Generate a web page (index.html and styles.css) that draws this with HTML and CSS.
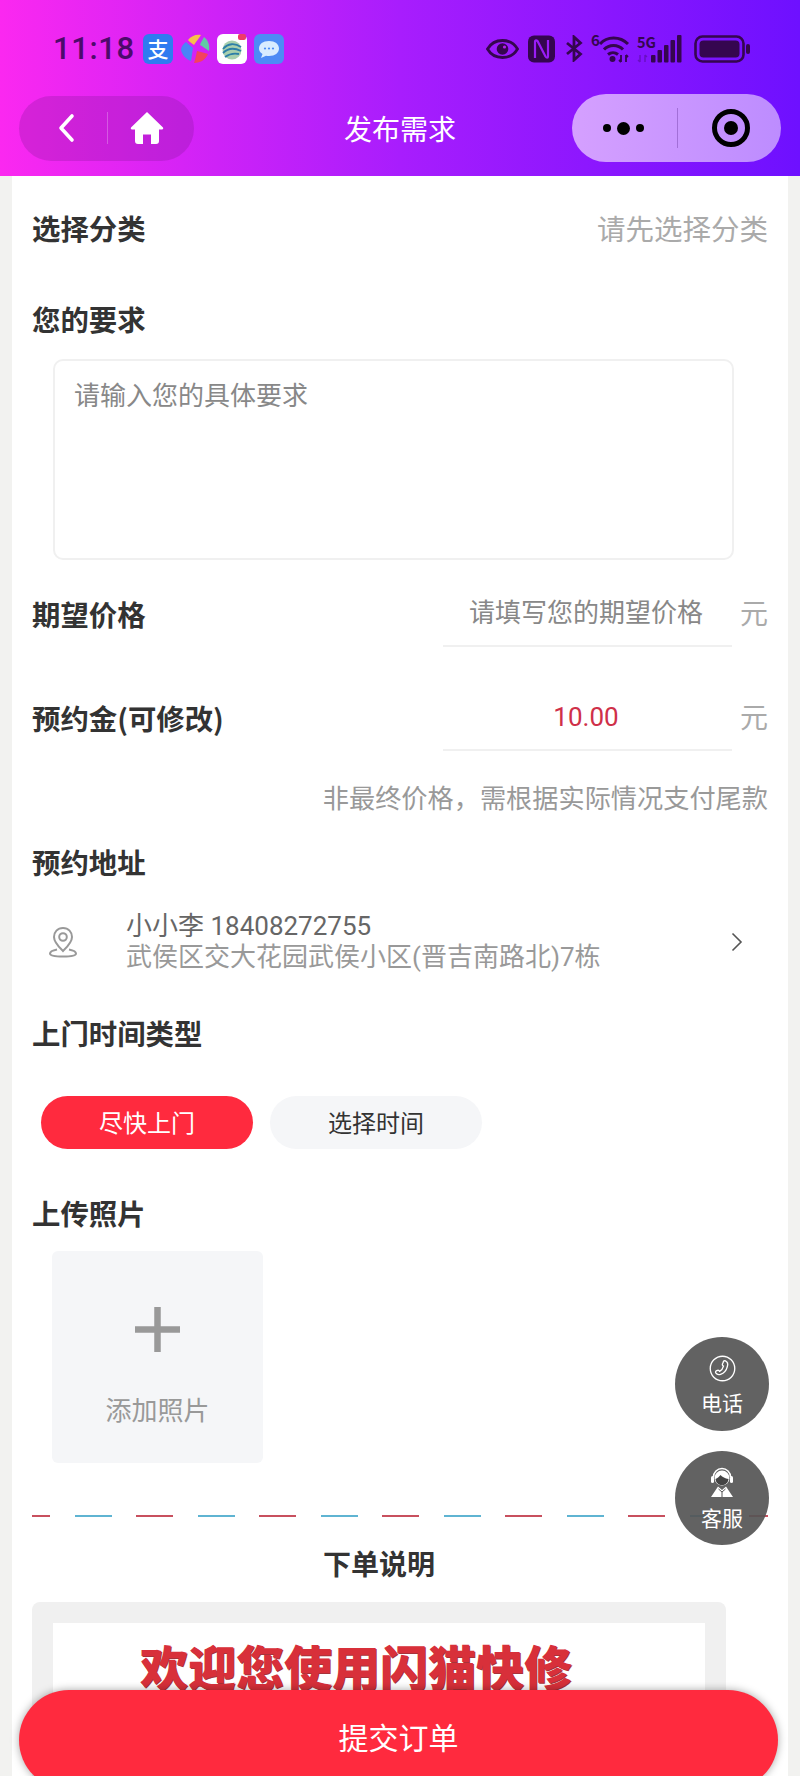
FILE: index.html
```html
<!DOCTYPE html>
<html lang="zh-CN">
<head>
    <meta charset="UTF-8">
    <meta name="viewport" content="width=device-width, initial-scale=1.0">
    <title>发布需求</title>
    <link rel="stylesheet" href="styles.css">
</head>
<body>
<div class="phone">
    <header class="top">
        <div class="status">
            <div class="status-left">
                <span class="clock">11:18</span>
                <svg class="app" viewBox="0 0 30 30"><rect width="30" height="30" rx="6" fill="#2f7bf0"/><text x="15" y="23" text-anchor="middle" class="app-char">支</text></svg>
                <svg class="app" viewBox="0 0 30 30"><path d="M8 6C11 2 16 0 21 1C19 4 16 8 14 11C12 9 9 8 8 6Z" fill="#f7c04a"/><path d="M24 3C28 6 30 11 29 17C26 15 22 12 20 11C21 8 23 5 24 3Z" fill="#62c9a5"/><path d="M6 8C8 10 11 12 13 14L11 27C6 25 2 21 1 16C1 13 3 10 6 8Z" fill="#4a84f6"/><path d="M28 20C26 25 21 29 14 29C15 26 16 22 17 17C21 18 25 19 28 20Z" fill="#f4415f"/></svg>
                <svg class="app" viewBox="0 0 30 30"><rect width="30" height="30" rx="6" fill="#fff"/><circle cx="15" cy="16" r="9.500" fill="#a8cfae"/><path d="M6 15c5-6 12-6 18-2M6 19c5-5 12-5 18-2M8 23c4-3 9-4 14-3" fill="none" stroke="#2c7fa8" stroke-width="1.800"/><rect x="21" y="0" width="8" height="6" rx="2" fill="#ee3b6a"/></svg>
                <svg class="app" viewBox="0 0 30 30"><rect width="30" height="30" rx="6" fill="#4d8bf5"/><path d="M15 7c6 0 10 3 10 7.500s-4 7.500-10 7.500c-1 0-2 0-3-.3L7 24l1.500-4C6 18.500 5 16.500 5 14.500 5 10 9 7 15 7Z" fill="#d8ecff"/><circle cx="11" cy="14.500" r="1.100" fill="#4d8bf5"/><circle cx="15" cy="14.500" r="1.100" fill="#4d8bf5"/><circle cx="19" cy="14.500" r="1.100" fill="#4d8bf5"/></svg>
            </div>
            <div class="status-right">
                <svg class="eye" width="33" height="24" viewBox="0 0 33 24"><path d="M1.500 12C5 6 10 3.500 16.500 3.500S28 6 31.500 12C28 18 23 20.500 16.500 20.500S5 18 1.500 12Z" fill="none" stroke="#35064f" stroke-width="2.800"/><circle cx="16.500" cy="12" r="5.800" fill="#35064f"/><circle cx="18.500" cy="10" r="1.600" fill="#b51ff0"/></svg>
                <svg class="nfc" width="27" height="28" viewBox="0 0 27 28"><rect x="0" y="0.500" width="27" height="27" rx="6" fill="#35064f"/><path d="M7 23V6.500C7 5 8.500 5 9.500 6L17.500 21.500C18.500 23 20 23 20 21.500V5" fill="none" stroke="#9a1cf8" stroke-width="2.200"/></svg>
                <svg class="bt" width="18" height="27" viewBox="0 0 18 27"><path d="M2 8L15.500 19L9 25V2L15.500 8L2 19" fill="none" stroke="#35064f" stroke-width="2.800"/></svg>
                <svg class="wifi" width="46" height="40" viewBox="0 -6 46 40"><text x="0" y="11" class="net-text">6</text><path d="M9 9C16 1 29 1 37 9M13 14.500C18 9 27 9 32 14.500M17 19.500C20 17 24 17 27 19.500" fill="none" stroke="#35064f" stroke-width="3"/><circle cx="21.500" cy="24" r="3" fill="#35064f"/><path d="M30 20v7M28 25l2 2M35 20v7M37 22l-2-2" fill="none" stroke="#35064f" stroke-width="1.800"/></svg>
                <svg class="signal" width="46" height="40" viewBox="0 -6 46 40"><text x="0" y="13" class="net-text" textLength="19" lengthAdjust="spacingAndGlyphs">5G</text><path d="M3 20v7M1 25l2 2M8 20v7M10 22l-2-2" fill="none" stroke="#35064f" stroke-width="1.400" opacity="0.35"/><rect x="14" y="20" width="4.500" height="7.500" rx="1" fill="#35064f"/><rect x="20.500" y="15" width="4.500" height="12.500" rx="1" fill="#35064f"/><rect x="27" y="10" width="4.500" height="17.500" rx="1" fill="#35064f"/><rect x="33.500" y="5" width="4.500" height="22.500" rx="1" fill="#35064f"/><rect x="40" y="0" width="4.500" height="27.500" rx="1" fill="#35064f"/></svg>
                <svg class="battery" width="56" height="28" viewBox="0 0 56 28"><rect x="1.500" y="1.500" width="48" height="25" rx="7" fill="none" stroke="#35064f" stroke-width="2.600"/><rect x="5.500" y="5.500" width="40" height="17" rx="4" fill="#35064f"/><rect x="52" y="9" width="4" height="10" rx="2" fill="#35064f"/></svg>
            </div>
        </div>
        <div class="nav">
            <div class="capsule-left">
                <svg width="20" height="30" viewBox="0 0 20 30"><path d="M15 3L4 15L15 27" fill="none" stroke="#fff" stroke-width="3.600" stroke-linecap="round" stroke-linejoin="round"/></svg>
                <i class="cap-line light"></i>
                <svg class="home" width="34" height="34" viewBox="0 0 34 34"><path d="M17 1L33 16.500C33.500 17.500 33 18.500 32 18.500H29V30C29 32 28 33 26 33H21V23.500H13V33H8C6 33 5 32 5 30V18.500H2C1 18.500 .5 17.500 1 16.500Z" fill="#fff"/></svg>
            </div>
            <div class="nav-title">发布需求</div>
            <div class="capsule-right">
                <div class="dots"><b></b><b class="big"></b><b></b></div>
                <i class="cap-line dark"></i>
                <div class="target"></div>
            </div>
        </div>
    </header>

    <main class="sheet">
        <div class="row row-cat">
            <div class="label">选择分类</div>
            <div class="hint">请先选择分类</div>
        </div>
        <div class="label need-label">您的要求</div>
        <div class="need-box">请输入您的具体要求</div>

        <div class="row row-price">
            <div class="label">期望价格</div>
            <div class="price-wrap">
                <div class="price-input">请填写您的期望价格</div>
                <span class="unit">元</span>
            </div>
        </div>
        <div class="row row-price">
            <div class="label">预约金(可修改)</div>
            <div class="price-wrap">
                <div class="price-input red">10.00</div>
                <span class="unit">元</span>
            </div>
        </div>
        <div class="note">非最终价格，需根据实际情况支付尾款</div>

        <div class="label addr-label">预约地址</div>
        <div class="addr">
            <svg class="pin" width="30" height="32" viewBox="0 0 30 32"><path d="M15 2C9.500 2 6 6 6 11C6 16.500 11 21 15 25C19 21 24 16.500 24 11C24 6 20.500 2 15 2Z" fill="none" stroke="#999" stroke-width="2"/><circle cx="15" cy="11" r="3.800" fill="none" stroke="#999" stroke-width="2"/><path d="M9 23.500C4 24.500 2 26 2 27.500C2 29.500 8 30.500 15 30.500S28 29.500 28 27.500C28 26 26 24.500 21 23.500" fill="none" stroke="#999" stroke-width="2"/></svg>
            <div class="addr-text">
                <div class="addr-name">小小李 18408272755</div>
                <div class="addr-detail">武侯区交大花园武侯小区(晋吉南路北)7栋</div>
            </div>
            <svg class="more" width="14" height="22" viewBox="0 0 14 22"><path d="M2.500 2.500L11 11L2.500 19.500" fill="none" stroke="#555" stroke-width="1.600"/></svg>
        </div>

        <div class="label time-label">上门时间类型</div>
        <div class="time-btns">
            <div class="pill on">尽快上门</div>
            <div class="pill">选择时间</div>
        </div>

        <div class="label photo-label">上传照片</div>
        <div class="photo-add">
            <svg width="45" height="45" viewBox="0 0 45 45"><path d="M22.500 0V45M0 22.500H45" stroke="#999" stroke-width="6.500"/></svg>
            <span>添加照片</span>
        </div>

        <div class="airmail"></div>
        <div class="order-title">下单说明</div>
        <div class="order-box">
            <div class="order-img">欢迎您使用闪猫快修</div>
        </div>
    </main>

    <div class="float-btn phone-btn">
        <svg width="27" height="27" viewBox="0 0 28 28"><circle cx="14" cy="14" r="12.700" fill="none" stroke="#fff" stroke-width="1.400"/><path d="M17 6c2 1 3 3 2 6c-1 4-4 7-7 8c-2 .7-4 0-5-1.500c-.5-1 0-1.800 1-2.300c1.500-.7 2.500-.5 3 .8c2-1 3.500-3.500 4-5.500c-1.300-.6-1.500-1.800-.6-3.200C15 6 16 5.500 17 6Z" fill="none" stroke="#fff" stroke-width="1.400"/></svg>
        <span>电话</span>
    </div>
    <div class="float-btn kefu-btn">
        <svg width="24" height="30" viewBox="0 0 24 30"><path d="M3.500 10a8.500 8.500 0 0 1 17 0" fill="none" stroke="#fff" stroke-width="1.600"/><circle cx="12" cy="11" r="7.500" fill="#fff"/><path d="M5.500 12c2-1 4-2.500 5-4c2 2 4.500 3.500 8 4c-.5 4-3 6-6.500 6s-6-2-6.500-6Z" fill="#444"/><rect x="1" y="9" width="3" height="7" rx="1.500" fill="#fff"/><rect x="20" y="9" width="3" height="7" rx="1.500" fill="#fff"/><path d="M8 19.500L1 30H23L16 19.500L12 23Z" fill="#fff"/><path d="M8.500 22l3.500 3l3.500-3M12 25v5" fill="none" stroke="#555" stroke-width="1"/></svg>
        <span>客服</span>
    </div>

    <div class="submit-bar">提交订单</div>
</div>
</body>
</html>
```

FILE: styles.css
```css
* {
    box-sizing: border-box;
}

body {
    margin: 0;
    font-family: "Noto Sans CJK SC", "Noto Sans", sans-serif;
    background: #f2f2f0;
}

.phone {
    position: relative;
    width: 800px;
    height: 1776px;
    overflow: hidden;
}

/* top bar */
.top {
    height: 176px;
    background: linear-gradient(90deg, #fb28f0 0%, #a81dfd 50%, #6e10ff 100%);
}
.status {
    height: 93px;
    display: flex;
    align-items: flex-start;
    justify-content: space-between;
    padding: 33px 50px 0 53px;
}
.status-left {
    display: flex;
    align-items: center;
    height: 31px;
    gap: 7px;
}
.clock {
    font-family: Roboto, sans-serif;
    font-size: 31px;
    font-weight: 500;
    letter-spacing: 0.6px;
    color: #4d0a6b;
    margin-right: 1px;
}
.app {
    width: 30px;
    height: 30px;
}
.app-char {
    font-size: 21px;
    font-weight: 500;
    fill: #fff;
}
.status-right {
    display: flex;
    align-items: center;
    height: 31px;
}
.nfc {
    margin-left: 9px;
}
.bt {
    margin-left: 10px;
}
.wifi {
    margin-left: 8px;
}
.battery {
    margin-left: 11px;
}
.net-text {
    font-size: 15px;
    font-weight: 700;
    fill: #35064f;
}

.nav {
    display: grid;
    grid-template-columns: 1fr auto 1fr;
    align-items: center;
    height: 70px;
    padding: 0 19px;
}
.capsule-left {
    width: 175px;
    height: 65px;
    border-radius: 33px;
    background: rgba(130, 20, 150, 0.28);
    display: flex;
    align-items: center;
    padding-left: 38px;
}
.cap-line {
    display: block;
    width: 1px;
}
.cap-line.light {
    height: 32px;
    margin-left: 30px;
    background: rgba(255, 255, 255, 0.25);
}
.home {
    margin-left: 22px;
}
.cap-line.dark {
    height: 40px;
    margin-left: 33px;
    background: rgba(90, 40, 140, 0.35);
}
.nav-title {
    font-size: 28px;
    color: #fff;
    line-height: 40px;
}
.capsule-right {
    justify-self: end;
    width: 209px;
    height: 68px;
    border-radius: 34px;
    background: linear-gradient(90deg, #d5a0ff, #bd8cff);
    display: flex;
    align-items: center;
    padding-left: 31px;
}
.dots {
    display: flex;
    align-items: center;
    gap: 6px;
}
.dots b {
    width: 8px;
    height: 8px;
    border-radius: 50%;
    background: #000;
}
.dots b.big {
    width: 13px;
    height: 13px;
}
.target {
    width: 38px;
    height: 38px;
    margin-left: 34px;
    border: 5px solid #000;
    border-radius: 50%;
    display: flex;
    align-items: center;
    justify-content: center;
}
.target::after {
    content: "";
    width: 14px;
    height: 14px;
    border-radius: 50%;
    background: #000;
}

/* form sheet */
.sheet {
    margin: 0 12px;
    width: 776px;
    height: 1600px;
    background: #fff;
    padding: 0 20px;
}
.row {
    display: flex;
    align-items: center;
    justify-content: space-between;
}
.label {
    font-size: 28.400px;
    font-weight: 700;
    line-height: 40px;
    color: #333;
}
.row-cat {
    padding-top: 32px;
}
.hint {
    font-size: 28.500px;
    line-height: 40px;
    color: #aaa;
}
.need-label {
    margin-top: 51px;
}
.need-box {
    margin: 20px 0 0 21px;
    width: 681px;
    height: 201px;
    border: 2px solid #f0f0f0;
    border-radius: 10px;
    padding: 13px 19px;
    font-size: 26px;
    line-height: 40px;
    color: #888;
}
.row-price {
    height: 66px;
    margin-bottom: 38px;
}
.need-box + .row-price {
    margin-top: 21px;
}
.row-price + .note {
    margin-top: -12px;
}
.price-wrap {
    display: flex;
    align-items: center;
}
.price-input {
    width: 289px;
    height: 66px;
    padding-right: 3px;
    line-height: 64px;
    border-bottom: 2px solid #f0f0f0;
    font-family: Roboto, "Noto Sans CJK SC", sans-serif;
    font-size: 26px;
    text-align: center;
    color: #888;
}
.price-input.red {
    color: #cf3049;
}
.unit {
    width: 28px;
    margin-left: 8px;
    padding-bottom: 4px;
    font-size: 28px;
    color: #aaa;
}
.note {
    text-align: right;
    font-size: 26.200px;
    line-height: 40px;
    color: #999;
}
.addr-label {
    margin-top: 25px;
}
.addr {
    display: flex;
    align-items: center;
    height: 70px;
    margin-top: 25px;
    padding-left: 16px;
}
.addr-text {
    margin-left: 48px;
    flex: 1;
}
.addr-name,
.addr-detail {
    font-family: Roboto, "Noto Sans CJK SC", sans-serif;
    font-size: 26px;
    line-height: 31px;
}
.addr-name {
    color: #666;
}
.addr-detail {
    color: #999;
}
.more {
    margin-right: 24px;
}
.time-label {
    margin-top: 36px;
}
.time-btns {
    display: flex;
    gap: 17px;
    margin: 43px 0 0 9px;
}
.pill {
    width: 212px;
    height: 53px;
    border-radius: 27px;
    background: #f5f6f8;
    font-size: 24px;
    line-height: 52px;
    text-align: center;
    color: #333;
}
.pill.on {
    background: #ff2a3e;
    color: #fff;
}
.photo-label {
    margin-top: 44px;
}
.photo-add {
    margin: 18px 0 0 20px;
    width: 211px;
    height: 212px;
    background: #f5f6f8;
    border-radius: 6px;
    display: flex;
    flex-direction: column;
    align-items: center;
    padding-top: 56px;
}
.photo-add span {
    margin-top: 38px;
    font-size: 26px;
    color: #999;
    line-height: 38px;
}
.airmail {
    height: 2px;
    margin-top: 52px;
    background: repeating-linear-gradient(90deg, #c8505e 0 37px, transparent 37px 62px, #5fb4d2 62px 99px, transparent 99px 123px);
    background-position: -19px 0;
}
.order-title {
    margin-top: 26px;
    padding-right: 42px;
    text-align: center;
    font-size: 28px;
    font-weight: 700;
    line-height: 40px;
    color: #333;
}
.order-box {
    margin-top: 19px;
    width: 694px;
    height: 300px;
    background: #f0f0f0;
    border-radius: 8px;
    padding: 21px 21px 0;
}
.order-img {
    height: 260px;
    background: #fff;
    padding-top: 8px;
    padding-left: 87px;
    font-size: 48px;
    font-weight: 900;
    line-height: 68px;
    color: #d8303a;
    text-shadow: 1px 1px 0 #a8323a;
    white-space: nowrap;
}

/* things lying over the form */
.float-btn {
    position: absolute;
    left: 675px;
    width: 94px;
    height: 94px;
    border-radius: 50%;
    background: rgba(85, 85, 85, 0.92);
    display: flex;
    flex-direction: column;
    align-items: center;
    color: #fff;
    font-size: 21px;
    line-height: 28px;
}
.float-btn span {
    margin-top: 6px;
}
.phone-btn {
    top: 1337px;
    padding-top: 18px;
}
.kefu-btn {
    top: 1451px;
    padding-top: 16px;
}
.submit-bar {
    position: absolute;
    left: 19px;
    top: 1690px;
    width: 759px;
    height: 100px;
    border-radius: 50px;
    background: #ff2a3e;
    box-shadow: 0 0 8px rgba(0, 0, 0, 0.35);
    color: #fff;
    font-size: 30px;
    line-height: 92px;
    text-align: center;
}
```
